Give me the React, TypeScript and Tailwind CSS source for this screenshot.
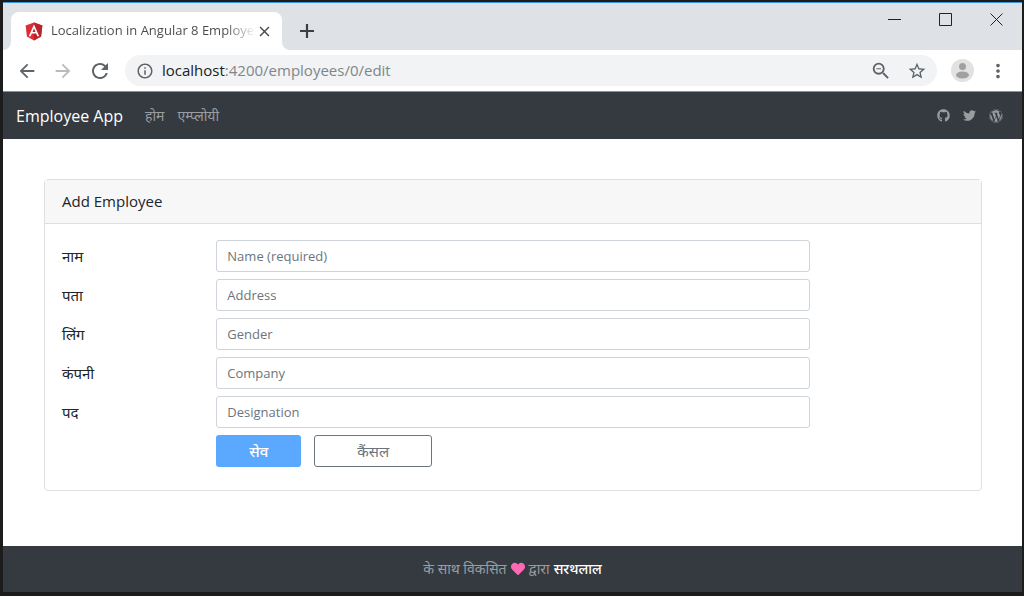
import React from "react";
import { FaGithub, FaHeart, FaTwitter, FaWordpress } from "react-icons/fa";
import {
  MdArrowBack,
  MdArrowForward,
  MdClose,
  MdInfoOutline,
  MdMoreVert,
  MdRefresh,
  MdStarBorder,
  MdZoomOut,
} from "react-icons/md";

const navLinks = [
  { label: "होम", href: "#home" },
  { label: "एम्प्लोयी", href: "#employees" },
];

const socialLinks = [
  { label: "Github", href: "#github", icon: <FaGithub size={13} /> },
  { label: "Twitter", href: "#twitter", icon: <FaTwitter size={13} /> },
  { label: "WordPress", href: "#wordpress", icon: <FaWordpress size={14} /> },
];

const fields = [
  { id: "name", label: "नाम", placeholder: "Name (required)" },
  { id: "address", label: "पता", placeholder: "Address" },
  { id: "gender", label: "लिंग", placeholder: "Gender" },
  { id: "company", label: "कंपनी", placeholder: "Company" },
  { id: "designation", label: "पद", placeholder: "Designation" },
];

const AngularLogo: React.FC = () => (
  <svg
    className="shrink-0"
    width="18"
    height="19"
    viewBox="0 0 250 257"
    aria-hidden="true"
  >
    <path
      fill="#dd2c35"
      d="M125 4 9 45.300l17.700 153.400L125 253l98.300-54.300L241 45.300z"
    />
    <path fill="#b8242c" d="M125 4v249l98.300-54.300L241 45.300z" />
    <path
      fill="#fff"
      d="M125 32 52.500 194.500h27L94 158h62l14.600 36.500h27L125 32zm21.200 103.600h-42.400L125 84.700z"
    />
  </svg>
);

const TabStrip: React.FC = () => (
  <div className="flex h-[47px] items-end justify-between bg-[#dee1e6]">
    <div className="flex items-end">
      <span className="h-2 w-2 bg-white">
        <span className="block h-2 w-2 rounded-br-lg bg-[#dee1e6]" />
      </span>
      <div className="flex h-[38px] w-[271px] items-center rounded-t-lg bg-white pr-[9px] pl-[14px]">
        <AngularLogo />
        <div className="ml-2 min-w-0 flex-1 bg-linear-to-r from-[#45494d] from-85% to-transparent bg-clip-text text-[13px] whitespace-nowrap text-transparent">
          Localization in Angular 8 Employe
        </div>
        <button type="button" aria-label="Close tab" className="text-[#45494d]">
          <MdClose size={17} />
        </button>
      </div>
      <span className="h-2 w-2 bg-white">
        <span className="block h-2 w-2 rounded-bl-lg bg-[#dee1e6]" />
      </span>
      <button
        type="button"
        aria-label="New tab"
        className="ml-[7px] flex h-[38px] w-5 items-center justify-center text-[#3c4043]"
      >
        <svg width="14" height="14" viewBox="0 0 14 14" stroke="currentColor" strokeWidth="2.2">
          <path d="M7 0v14M0 7h14" />
        </svg>
      </button>
    </div>

    <div className="flex items-center gap-[38px] self-start pt-[10px] pr-[19px] text-[#222]">
      <button type="button" aria-label="Minimize">
        <svg width="13" height="13" viewBox="0 0 13 13" stroke="currentColor">
          <path d="M0 6.500h13" />
        </svg>
      </button>
      <button type="button" aria-label="Maximize">
        <svg width="13" height="13" viewBox="0 0 13 13" stroke="currentColor" fill="none">
          <path d="M.5.500h12v12H.5z" />
        </svg>
      </button>
      <button type="button" aria-label="Close">
        <svg width="13" height="13" viewBox="0 0 13 13" stroke="currentColor">
          <path d="m.5.500 12 12M12.500.500l-12 12" />
        </svg>
      </button>
    </div>
  </div>
);

const Toolbar: React.FC = () => (
  <div className="flex h-[42px] items-center border-b border-[#8e9194] bg-white px-[13px] text-[#5f6368]">
    <div className="flex items-center gap-[14px]">
      <button type="button" aria-label="Back">
        <MdArrowBack size={22} />
      </button>
      <button type="button" aria-label="Forward" className="text-[#b9bbbe]">
        <MdArrowForward size={22} />
      </button>
      <button type="button" aria-label="Reload">
        <MdRefresh size={24} />
      </button>
    </div>
    <div className="ml-[13px] flex h-[31px] flex-1 items-center rounded-full bg-[#f1f3f4] pr-[10px] pl-[11px]">
      <MdInfoOutline size={18} />
      <span className="ml-2 flex-1 text-[15px] text-[#80868b]">
        <span className="text-[#202124]">localhost</span>:4200/employees/0/edit
      </span>
      <button type="button" aria-label="Zoom" className="mr-[15px]">
        <MdZoomOut size={22} />
      </button>
      <button type="button" aria-label="Bookmark this page">
        <MdStarBorder size={20} />
      </button>
    </div>
    <button type="button" aria-label="Profile" className="ml-[14px]">
      <svg width="23" height="23" viewBox="0 0 23 23">
        <circle cx="11.500" cy="11.500" r="11.500" fill="#e2e2e2" />
        <circle cx="11.500" cy="7.500" r="3.500" fill="#a0a0a0" />
        <ellipse cx="11.500" cy="16" rx="6.500" ry="3.500" fill="#a0a0a0" />
      </svg>
    </button>
    <button type="button" aria-label="Menu" className="ml-[13px]">
      <MdMoreVert size={22} />
    </button>
  </div>
);

const Navbar: React.FC = () => (
  <nav className="flex h-[47px] items-center bg-[#343a40] pr-[19px] pl-[13px]">
    <a href="#app" className="mr-[22px] text-base text-white">
      Employee App
    </a>
    <div className="flex gap-[13px] text-sm text-[#9a9da0]">
      {navLinks.map((link) => (
        <a key={link.href} href={link.href}>
          {link.label}
        </a>
      ))}
    </div>
    <div className="ml-auto flex items-center gap-[13px] text-[#9a9da0]">
      {socialLinks.map((link) => (
        <a key={link.label} href={link.href} aria-label={link.label}>
          {link.icon}
        </a>
      ))}
    </div>
  </nav>
);

const EmployeeForm: React.FC = () => (
  <div className="rounded border border-[#dfdfdf]">
    <h1 className="flex h-11 items-center border-b border-[#dfdfdf] bg-[#f7f7f7] px-[17px] text-[15px]">
      Add Employee
    </h1>
    <form className="flex flex-col gap-[7px] px-[17px] pt-4 pb-[23px]">
      {fields.map((field) => (
        <div key={field.id} className="grid grid-cols-12 items-center gap-6">
          <label htmlFor={field.id} className="col-span-2 text-[15px]">
            {field.label}
          </label>
          <input
            id={field.id}
            type="text"
            placeholder={field.placeholder}
            className="col-span-8 h-8 rounded-[3px] border border-[#ced4da] bg-white px-[10px] text-[13px] placeholder:text-[#6c757d]"
          />
        </div>
      ))}
      <div className="grid grid-cols-12 gap-6">
        <div className="col-span-8 col-start-3 flex gap-[13px]">
          <button
            type="submit"
            disabled
            className="h-8 rounded-[3px] bg-[#5aa9ff] px-[33px] text-[15px] font-medium text-white"
          >
            सेव
          </button>
          <button
            type="button"
            className="h-8 rounded-[3px] border border-[#6c757d] px-[42px] text-[15px] text-[#6c757d]"
          >
            कैंसल
          </button>
        </div>
      </div>
    </form>
  </div>
);

const Footer: React.FC = () => (
  <footer className="flex h-[46px] items-center justify-center gap-1 bg-[#343a40] text-sm text-[#9a9da0]">
    के साथ विकसित
    <FaHeart size={14} className="text-[#ff69b4]" />
    द्वारा
    <a href="#author" className="font-medium text-white">
      सरथलाल
    </a>
  </footer>
);

const App: React.FC = () => {
  return (
    <div className="flex min-h-screen flex-col border-t-2 border-r-2 border-b-4 border-l-[3px] border-[#1c1c1c] bg-white font-['Open_Sans','Noto_Sans',sans-serif] text-[#212529]">
      <div className="h-px bg-[#3a96dd]" />
      <TabStrip />
      <Toolbar />
      <Navbar />
      <main className="flex-1 py-10 pr-10 pl-[41px]">
        <EmployeeForm />
      </main>
      <Footer />
    </div>
  );
};

export default App;
